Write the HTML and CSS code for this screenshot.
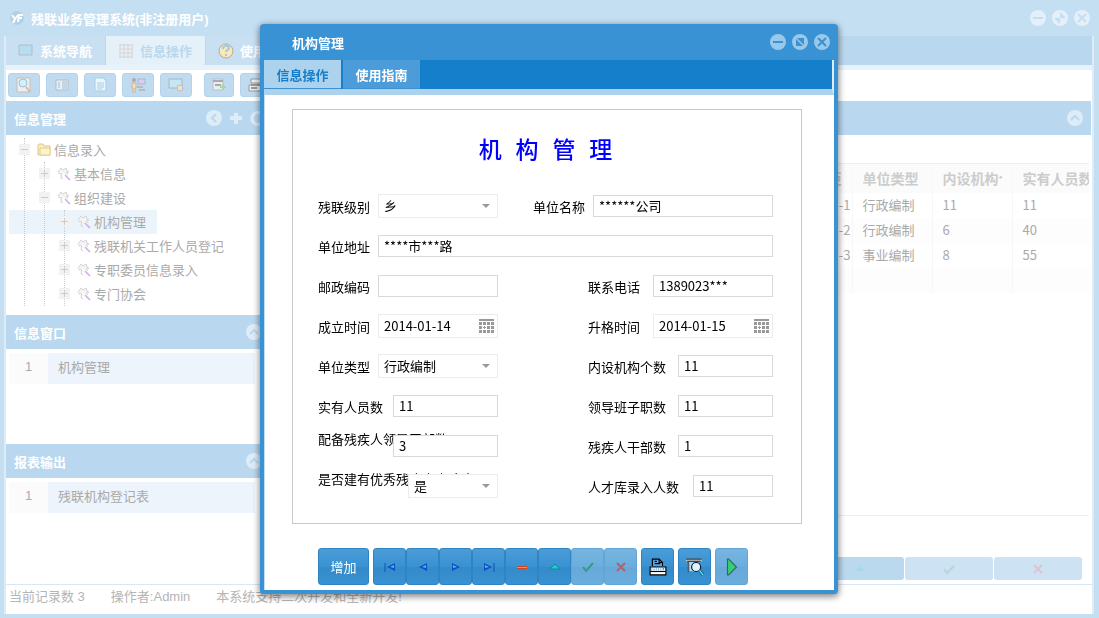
FILE: index.html
```html
<!DOCTYPE html>
<html lang="zh-CN">

<head>
    <meta charset="UTF-8">
    <meta name="viewport" content="width=device-width, initial-scale=1.0">
    <title>残联业务管理系统</title>
    <link rel="stylesheet" href="styles.css">
</head>

<body>
    <!-- shared icons -->
    <svg class="sprite" aria-hidden="true">
        <symbol id="i-min" viewBox="0 0 16 16"><circle cx="8" cy="8" r="8" fill="currentColor"/><path class="cut" d="M3 8h10"/></symbol>
        <symbol id="i-max" viewBox="0 0 16 16"><circle cx="8" cy="8" r="8" fill="currentColor"/><path class="cut-fill" d="M5 4h7v7zM4 5v7h7z"/></symbol>
        <symbol id="i-restore" viewBox="0 0 16 16"><circle cx="8" cy="8" r="8" fill="currentColor"/><path class="cut-fill" d="M8 2v6h6zM2 8h6v6z"/></symbol>
        <symbol id="i-close" viewBox="0 0 16 16"><circle cx="8" cy="8" r="8" fill="currentColor"/><path class="cut" d="M4 4l8 8M12 4l-8 8"/></symbol>
        <symbol id="i-up" viewBox="0 0 16 16"><circle cx="8" cy="8" r="8" fill="currentColor"/><path class="cut" d="M4 10l4-4 4 4"/></symbol>
        <symbol id="i-left" viewBox="0 0 16 16"><circle cx="8" cy="8" r="8" fill="currentColor"/><path class="cut" d="M10 4L6 8l4 4"/></symbol>
        <symbol id="i-wand" viewBox="0 0 14 14"><path d="M1 5l3-4 2 2 3-2 1 3 2 1-3 1 2 2M1 6l4 1-1 4 2 1" fill="#f4f4f4" stroke="#d4d4d4"/><path d="M8 8l5 5" stroke="#d5a6f0" stroke-width="1.500"/></symbol>
        <symbol id="i-date" viewBox="0 0 16 16"><path d="M0 1h15v2H0zM0 4h3v3H0zM4 4h3v3H4zM8 4h3v3H8zM12 4h3v3h-3zM0 8h3v3H0zM5 8h1v3H5zM4 9h3v1H4zM8 8h3v3H8zM12 8h3v3h-3zM0 12h3v3H0zM4 12h3v3H4zM8 12h3v3H8zM12 12h3v3h-3z" fill="#999"/></symbol>
    </svg>

    <div class="app">
        <header class="app-title">
            <svg width="18" height="18" viewBox="0 0 18 18"><circle cx="9" cy="9" r="7" fill="#b3d1e6"/><path d="M4 6l3 4-2 4M10 6L7 10M10 13l1-7h4M10 9h4" stroke="#fff" stroke-width="2" fill="none"/></svg>
            <span>残联业务管理系统(非注册用户)</span>
            <div class="window-tools">
                <button type="button" aria-label="最小化"><svg><use href="#i-min"/></svg></button>
                <button type="button" aria-label="还原"><svg><use href="#i-restore"/></svg></button>
                <button type="button" aria-label="关闭"><svg><use href="#i-close"/></svg></button>
            </div>
        </header>

        <div class="app-body">
            <nav class="app-tabs">
                <button type="button"><svg width="16" height="14" viewBox="0 0 16 14"><path d="M1 1h13v10H1z" fill="#b8dcf0" stroke="#b4bcc2"/></svg>系统导航</button>
                <button type="button" class="active"><svg width="16" height="16" viewBox="0 0 16 16"><path d="M1 2h14M1 6h14M1 10h14M1 14h14M2 1v14M6 1v14M10 1v14M14 1v14" stroke="#d9d2d2"/></svg>信息操作</button>
                <button type="button"><svg width="16" height="16" viewBox="0 0 16 16"><circle cx="8" cy="8" r="7" fill="#fbe9b4" stroke="#b0a9a6"/><path d="M5 6c0-4 6-4 6-1 0 2-3 2-3 4M8 11v2" fill="none" stroke="#9cc7ea" stroke-width="2"/></svg>使用指南</button>
            </nav>

            <div class="toolbar">
                <button type="button" aria-label="查询"><svg viewBox="0 0 16 16"><path d="M1 1h13v14H1z" fill="#eee" stroke="#c4bfb8"/><circle cx="7" cy="6" r="4" fill="#d4effa" stroke="#9dc2d4"/><path d="M10 10l4 5" stroke="#e8b199" stroke-width="2"/></svg></button>
                <button type="button" aria-label="列表"><svg viewBox="0 0 16 16"><path d="M2 3h12v10H2z" fill="#e3f1fa" stroke="#b4bcc3"/><path d="M4 6h2M4 8h2M4 10h2M8 5h5M8 7h5M8 9h5M8 11h5" stroke="#a7bbc9"/></svg></button>
                <button type="button" aria-label="文档"><svg viewBox="0 0 16 16"><path d="M3 1h8l3 3v10H3z" fill="#e9f6fd" stroke="#a8cde4"/><path d="M5 6h7M5 8h7M5 10h7M5 12h5" stroke="#a8cde4"/></svg></button>
                <button type="button" aria-label="人员"><svg viewBox="0 0 16 16"><circle cx="4" cy="3" r="2" fill="#b3aaa4"/><path d="M2 6h4v5H5v5H3v-5H2z" fill="#f4dfbb" stroke="#c5b499"/><path d="M8 2h7v5H8z" fill="#d8cdf4" stroke="#aeb6c2"/><path d="M7 10h6M9 13h6" stroke="#bbb" stroke-width="2"/></svg></button>
                <button type="button" aria-label="显示"><svg viewBox="0 0 16 16"><path d="M1 2h13v9H1z" fill="#c8e5f4" stroke="#a9b6be"/><circle cx="12" cy="11" r="3" fill="#efe6b4" stroke="#c8b0dc"/></svg></button>
                <button type="button" class="gap" aria-label="导出"><svg viewBox="0 0 16 16"><path d="M2 2h10v11H2z" fill="#e8eef2" stroke="#b9c0c5"/><path d="M2 4h10M4 8h6" stroke="#aaa" stroke-width="2"/><path d="M9 10h6M12 7v6" stroke="#a7d7a9" stroke-width="2"/></svg></button>
                <button type="button" aria-label="打印"><svg viewBox="0 0 16 16"><path d="M3 2h12v4H3zM1 8h14v6H1z" fill="#eee" stroke="#999"/><path d="M3 8h10M3 11h6" stroke="#999" stroke-width="2"/></svg></button>
            </div>

            <div class="main">
                <aside class="sidebar">
                    <section class="panel panel-tree">
                        <h2>信息管理
                            <span class="tools">
                                <svg><use href="#i-left"/></svg>
                                <svg viewBox="0 0 16 16"><path d="M8 3v11M2 8h12" stroke="currentColor" stroke-width="4"/></svg>
                                <svg viewBox="0 0 16 16"><path d="M12 4a6 6 0 1 0 2 5" stroke="currentColor" stroke-width="3" fill="none"/></svg>
                            </span>
                        </h2>
                        <ul class="tree">
                            <li>
                                <div class="node"><i class="toggle minus"></i><svg width="14" height="14" viewBox="0 0 14 14"><path d="M1 12V2l1-1h4l1 2h6v9z" fill="#fbefb8" stroke="#dcc78c"/><path d="M3 5h10v7H3z" fill="#fdf5c9" stroke="#e2cf95"/></svg>信息录入</div>
                                <ul>
                                    <li><div class="node"><i class="toggle"></i><svg width="14" height="14"><use href="#i-wand"/></svg>基本信息</div></li>
                                    <li>
                                        <div class="node"><i class="toggle minus"></i><svg width="14" height="14"><use href="#i-wand"/></svg>组织建设</div>
                                        <ul>
                                            <li><div class="node selected"><i class="toggle"></i><svg width="14" height="14"><use href="#i-wand"/></svg>机构管理</div></li>
                                            <li><div class="node"><i class="toggle"></i><svg width="14" height="14"><use href="#i-wand"/></svg>残联机关工作人员登记</div></li>
                                            <li><div class="node"><i class="toggle"></i><svg width="14" height="14"><use href="#i-wand"/></svg>专职委员信息录入</div></li>
                                            <li><div class="node"><i class="toggle"></i><svg width="14" height="14"><use href="#i-wand"/></svg>专门协会</div></li>
                                        </ul>
                                    </li>
                                </ul>
                            </li>
                        </ul>
                    </section>
                    <section class="panel panel-windows">
                        <h2>信息窗口 <svg><use href="#i-up"/></svg></h2>
                        <table class="list"><tr><th scope="row">1</th><td>机构管理</td></tr></table>
                    </section>
                    <section class="panel panel-reports">
                        <h2>报表输出 <svg><use href="#i-up"/></svg></h2>
                        <table class="list"><tr><th scope="row">1</th><td>残联机构登记表</td></tr></table>
                    </section>
                </aside>

                <section class="panel records">
                    <h2>机构管理 <svg><use href="#i-up"/></svg></h2>
                    <div class="grid-wrap">
                        <table class="grid">
                            <colgroup><col><col class="c-std"><col class="c-std"><col class="c-std"><col class="c-last"></colgroup>
                            <thead>
                                <tr><th></th><th class="end">距</th><th>单位类型</th><th><div>内设机构个数</div></th><th><div>实有人员数</div></th></tr>
                            </thead>
                            <tbody>
                                <tr><td></td><td class="end">-1</td><td>行政编制</td><td>11</td><td>11</td></tr>
                                <tr><td></td><td class="end">-2</td><td>行政编制</td><td>6</td><td>40</td></tr>
                                <tr><td></td><td class="end">-3</td><td>事业编制</td><td>8</td><td>55</td></tr>
                                <tr class="blank"><td></td><td></td><td></td><td></td><td></td></tr>
                            </tbody>
                        </table>
                    </div>
                    <div class="pager">
                        <button type="button" aria-label="编辑"><svg viewBox="0 0 12 12"><path d="M1 8l5-5 5 5z" fill="#a5dbe4"/></svg></button>
                        <button type="button" disabled aria-label="保存"><svg viewBox="0 0 12 12"><path d="M1 6l3 4 7-7" fill="none" stroke="#b5d5d8" stroke-width="2"/></svg></button>
                        <button type="button" disabled aria-label="取消"><svg viewBox="0 0 12 12"><path d="M2 2l8 8M10 2l-8 8" stroke="#dcc4d0" stroke-width="2"/></svg></button>
                    </div>
                </section>
            </div>

            <footer class="status">
                <span>当前记录数 3</span>
                <span>操作者:Admin</span>
                <span>本系统支持二次开发和全新开发!</span>
            </footer>
        </div>
    </div>

    <div class="overlay">
        <div class="dialog" role="dialog" aria-label="机构管理">
            <header class="dialog-title">
                <span>机构管理</span>
                <div class="window-tools">
                    <button type="button" aria-label="最小化"><svg><use href="#i-min"/></svg></button>
                    <button type="button" aria-label="最大化"><svg><use href="#i-max"/></svg></button>
                    <button type="button" aria-label="关闭"><svg><use href="#i-close"/></svg></button>
                </div>
            </header>
            <nav class="dialog-tabs">
                <button type="button" class="active">信息操作</button>
                <button type="button">使用指南</button>
            </nav>

            <div class="dialog-body">
                <form class="sheet">
                    <h1>机 构 管 理</h1>
                    <div class="row">
                        <div class="field left">
                            <label for="level">残联级别</label>
                            <span class="select w-120"><select id="level"><option>乡</option></select></span>
                        </div>
                        <div class="field wide">
                            <label for="name">单位名称</label>
                            <input id="name" class="w-180" type="text" value="******公司">
                        </div>
                    </div>
                    <div class="row">
                        <div class="field full">
                            <label for="addr">单位地址</label>
                            <input id="addr" class="w-395" type="text" value="****市***路">
                        </div>
                    </div>
                    <div class="row">
                        <div class="field left">
                            <label for="zip">邮政编码</label>
                            <input id="zip" class="w-120" type="text">
                        </div>
                        <div class="field right">
                            <label for="tel">联系电话</label>
                            <input id="tel" class="w-120" type="text" value="1389023***">
                        </div>
                    </div>
                    <div class="row">
                        <div class="field left">
                            <label for="founded">成立时间</label>
                            <span class="date w-120"><input id="founded" type="text" value="2014-01-14"><button type="button" aria-label="选择日期"><svg><use href="#i-date"/></svg></button></span>
                        </div>
                        <div class="field right">
                            <label for="upgraded">升格时间</label>
                            <span class="date w-120"><input id="upgraded" type="text" value="2014-01-15"><button type="button" aria-label="选择日期"><svg><use href="#i-date"/></svg></button></span>
                        </div>
                    </div>
                    <div class="row">
                        <div class="field left">
                            <label for="type">单位类型</label>
                            <span class="select w-120"><select id="type"><option>行政编制</option></select></span>
                        </div>
                        <div class="field right">
                            <label for="units">内设机构个数</label>
                            <input id="units" class="w-95" type="text" value="11">
                        </div>
                    </div>
                    <div class="row">
                        <div class="field left">
                            <label for="staff">实有人员数</label>
                            <input id="staff" class="w-105" type="text" value="11">
                        </div>
                        <div class="field right">
                            <label for="leaders">领导班子职数</label>
                            <input id="leaders" class="w-95" type="text" value="11">
                        </div>
                    </div>
                    <div class="row">
                        <div class="field left long">
                            <label for="disabled-leaders">配备残疾人领导干部数</label>
                            <input id="disabled-leaders" class="w-105" type="text" value="3">
                        </div>
                        <div class="field right">
                            <label for="cadres">残疾人干部数</label>
                            <input id="cadres" class="w-95" type="text" value="1">
                        </div>
                    </div>
                    <div class="row">
                        <div class="field left long">
                            <label for="pool">是否建有优秀残疾人人才库</label>
                            <span class="select w-90"><select id="pool"><option>是</option></select></span>
                        </div>
                        <div class="field right">
                            <label for="pool-count">人才库录入人数</label>
                            <input id="pool-count" class="w-80" type="text" value="11">
                        </div>
                    </div>
                </form>

                <div class="actions">
                    <button type="button" class="add">增加</button>
                    <div class="group">
                        <button type="button" aria-label="首条"><svg viewBox="0 0 12 12"><path d="M11 2v8L3 6z" fill="#0a50c0"/><path d="M10 4v3L6 6z" fill="#5cb0ff"/><path d="M1 2v9" stroke="#0a50c0"/></svg></button>
                        <button type="button" aria-label="上一条"><svg viewBox="0 0 12 12"><path d="M10 2v8L2 6z" fill="#0a50c0"/><path d="M9 4v3L5 6z" fill="#5cb0ff"/></svg></button>
                        <button type="button" aria-label="下一条"><svg viewBox="0 0 12 12"><path d="M2 2v8l8-4z" fill="#0a50c0"/><path d="M3 4v3l4-1z" fill="#5cb0ff"/></svg></button>
                        <button type="button" aria-label="末条"><svg viewBox="0 0 12 12"><path d="M1 2v8l8-4z" fill="#0a50c0"/><path d="M2 4v3l4-1z" fill="#5cb0ff"/><path d="M11 2v9" stroke="#0a50c0"/></svg></button>
                        <button type="button" aria-label="删除"><svg viewBox="0 0 12 12"><path d="M1 5h10v3H1z" fill="#c42"/><path d="M1 6h10v1H1z" fill="#f90"/></svg></button>
                        <button type="button" aria-label="编辑"><svg viewBox="0 0 12 12"><path d="M1 8l5-5 5 5z" fill="#1fc8d2" stroke="#0d8c9c"/></svg></button>
                        <button type="button" disabled aria-label="保存"><svg viewBox="0 0 12 12"><path d="M1 6l3 4 7-8" fill="none" stroke="#3a9a80" stroke-width="2"/></svg></button>
                        <button type="button" disabled aria-label="取消"><svg viewBox="0 0 12 12"><path d="M2 2l8 8M10 2l-8 8" stroke="#b4606e" stroke-width="2"/></svg></button>
                    </div>
                    <button type="button" aria-label="打印"><svg class="big" viewBox="0 0 16 16"><path d="M3 7V1h6l3 3v3" fill="#5ba6dc" stroke="#000"/><path d="M9 1v3h3M5 3h2M5 5h5" fill="none" stroke="#000"/><path d="M1 8h14v7H1z" fill="#fff" stroke="#000"/><path d="M1 12h14" stroke="#000"/><path d="M2 10h12" stroke="#7db5e0" stroke-width="2" stroke-dasharray="1 1"/><path d="M13 9v1" stroke="#e00"/></svg></button>
                    <button type="button" aria-label="预览"><svg class="big" viewBox="0 0 16 16"><path d="M2 3v9h4M12 3v2" fill="none" stroke="#555"/><path d="M3 3h9v9H3z" fill="#a8d9f4"/><path d="M0 2h14" stroke="#ccc" stroke-width="2"/><path d="M0 1h14M1 3h12" stroke="#444"/><circle cx="9" cy="8" r="4" fill="#d9f4ff" stroke="#112"/><path d="M12 11l3 4" stroke="#07a" stroke-width="3"/><path d="M12 11l3 4" stroke="#8de"/></svg></button>
                    <button type="button" disabled aria-label="执行"><svg class="big" viewBox="0 0 16 16"><path d="M4 1h1l7 7-7 7H4z" fill="#35d06a" stroke="#3a6070"/></svg></button>
                </div>
            </div>
        </div>
    </div>
</body>

</html>
```
FILE: styles.css
```css
* {
    margin: 0;
    padding: 0;
    box-sizing: border-box;
}

body {
    font-family: "Liberation Sans", "Noto Sans CJK SC", sans-serif;
    font-size: 13px;
    color: #000;
    background: #c5dff2;
}

button {
    border: none;
    background: none;
    color: inherit;
    font: inherit;
}

svg {
    display: block;
    flex: none;
}

.sprite {
    position: absolute;
    width: 0;
    height: 0;
}

.cut {
    fill: none;
    stroke: var(--cut);
    stroke-width: 2;
}

.cut-fill {
    fill: var(--cut);
}

/* main window, dimmed behind the dialog */

.app {
    --cut: #c5dff2;
    display: flex;
    flex-direction: column;
    height: 100vh;
    padding: 0 5px 4px 4px;
    overflow: hidden;
}

.app-title {
    display: flex;
    align-items: center;
    gap: 5px;
    height: 36px;
    padding: 0 4px;
    color: #fff;
    font-weight: bold;
}

.window-tools {
    display: flex;
    gap: 6px;
    margin-left: auto;
}

.window-tools svg {
    width: 16px;
    height: 16px;
}

.app .window-tools {
    color: #e4f0f9;
}

.app-body {
    flex: 1;
    min-height: 0;
    display: flex;
    flex-direction: column;
    background: #fff;
    border-left: 2px solid #deecf8;
    border-right: 2px solid #deecf8;
}

.app-tabs {
    display: flex;
    gap: 1px;
    height: 34px;
    background: #b9d8ef;
    border-bottom: 5px solid #e7f2fb;
}

.app-tabs button {
    display: flex;
    align-items: center;
    gap: 6px;
    width: 99px;
    padding: 0 12px;
    color: #fff;
    font-weight: bold;
    background: #c9e0f3;
    white-space: nowrap;
}

.app-tabs .active {
    color: #b9d8ef;
    background: #e5f1f9;
}

.toolbar {
    display: flex;
    gap: 6px;
    height: 31px;
    padding: 3px 2px;
}

.toolbar button {
    display: flex;
    align-items: center;
    justify-content: center;
    width: 32px;
    height: 24px;
    border: 1px solid #b4d4ec;
    border-radius: 3px;
    background: #c0dbf0;
}

.toolbar .gap {
    width: 30px;
    margin-left: 6px;
}

.toolbar svg {
    width: 16px;
    height: 16px;
}

.main {
    flex: 1;
    min-height: 0;
    display: flex;
    gap: 4px;
    padding-right: 1px;
}

.sidebar {
    display: flex;
    flex-direction: column;
    width: 256px;
}

.panel {
    --cut: #b9d8ef;
}

.panel h2 {
    display: flex;
    align-items: center;
    justify-content: space-between;
    height: 34px;
    padding: 0 8px;
    color: #fff;
    font-size: 13px;
    background: #b9d8ef;
}

.panel h2 svg {
    width: 16px;
    height: 16px;
    color: #deecf8;
}

.sidebar h2 > svg {
    margin-right: -8px;
}

.tools {
    display: flex;
    gap: 6px;
    margin-right: -12px;
}

.panel-tree {
    height: 214px;
}

.panel-windows {
    height: 129px;
}

.tree {
    margin: 3px 0 0 18px;
}

.tree,
.tree ul {
    list-style: none;
    border-left: 1px dotted #ccc;
}

.tree ul {
    margin-left: 19px;
}

.node {
    display: flex;
    align-items: center;
    height: 24px;
    gap: 3px;
    padding-bottom: 1px;
    color: #aaa;
    white-space: nowrap;
}

.toggle {
    position: relative;
    width: 11px;
    height: 11px;
    margin: 0 4px 0 -6px;
    background: #f2f2f2;
}

.toggle::before,
.toggle::after {
    content: "";
    position: absolute;
    left: 2px;
    top: 5px;
    width: 7px;
    height: 1px;
    background: #ccc;
}

.toggle::after {
    transform: rotate(90deg);
}

.toggle.minus::after {
    display: none;
}

.node.selected {
    width: 148px;
    margin-left: -56px;
    padding-left: 56px;
    background: rgba(160, 200, 235, 0.2);
}

.list {
    width: 246px;
    margin: 4px 3px;
    border-collapse: collapse;
    color: #aaa;
}

.list th {
    width: 39px;
    height: 31px;
    padding-bottom: 4px;
    background: #fbfbfb;
    font-weight: normal;
}

.list td {
    padding: 0 0 4px 10px;
    background: #edf4fb;
}

.records {
    flex: 1;
    min-width: 0;
    display: flex;
    flex-direction: column;
}

.grid-wrap {
    flex: 1;
    margin: 28px 2px 0 0;
    border-bottom: 1px solid #eee;
}

.grid {
    width: 100%;
    table-layout: fixed;
    border-collapse: collapse;
    font-family: "Noto Sans CJK SC", sans-serif;
    color: #aaa;
    text-align: left;
}

.c-std {
    width: 80px;
}

.c-last {
    width: 77px;
}

.grid th,
.grid td {
    height: 25px;
    padding: 0 10px;
    border-right: 1px solid #f7f7f7;
    font-size: 13px;
    line-height: 20px;
    white-space: nowrap;
    overflow: hidden;
}

.grid th {
    height: 29px;
    border-top: 1px solid #e6f0f8;
    background: #fbfbfb;
    color: #ccc;
    font-size: 14px;
}

.grid th div {
    overflow: hidden;
}

.grid tr > :last-child {
    padding-right: 0;
    border-right: none;
}

.grid td.end {
    padding-right: 1px;
    text-align: right;
}

.grid th.end {
    text-align: right;
}

.grid tbody tr:nth-child(even) {
    background: #fdfdfd;
}

.pager {
    display: flex;
    justify-content: flex-end;
    gap: 1px;
    height: 68px;
    padding: 41px 9px 4px;
}

.pager button {
    display: flex;
    align-items: center;
    justify-content: center;
    width: 88px;
    border-radius: 3px;
    background: #bad8ee;
}

.pager button:disabled {
    background: #cde2f3;
}

.pager svg {
    width: 12px;
    height: 12px;
}

.status {
    display: flex;
    gap: 26px;
    height: 30px;
    padding: 0 3px;
    border-top: 1px solid #d6e8f6;
    color: #b5b5b5;
    line-height: 23px;
}

/* dialog */

.overlay {
    position: fixed;
    inset: 0;
    display: flex;
    align-items: center;
    justify-content: center;
    padding-right: 1px;
}

.dialog {
    --cut: #3892d3;
    width: 578px;
    padding: 0 4px 4px;
    background: #3892d3;
    border-radius: 4px;
    box-shadow: 0 2px 6px 1px rgba(0, 0, 0, 0.45);
}

.dialog-title {
    display: flex;
    align-items: center;
    height: 36px;
    padding: 0 4px 0 28px;
    color: #fff;
    font-weight: bold;
}

.dialog-title .window-tools {
    color: #9ac8e9;
}

.dialog-tabs {
    display: flex;
    gap: 2px;
    height: 35px;
    background: #157fcc;
    border-right: 2px solid #deecf8;
    border-bottom: 6px solid #add2ed;
}

.dialog-tabs button {
    width: 77px;
    color: #fff;
    font-weight: bold;
    background: #4b9cd8;
    border-bottom: 1px solid #3892d3;
}

.dialog-tabs .active {
    color: #157fcc;
    background: #add2ed;
}

.dialog-body {
    padding: 14px 32px 5px 27px;
    background: #fff;
    border-left: 1px solid #c5dff2;
}

.sheet {
    display: flex;
    flex-direction: column;
    gap: 18px;
    padding: 18px 28px 26px 25px;
    border: 1px solid #c8c8c8;
    font-family: "Noto Sans CJK SC", sans-serif;
}

.sheet h1 {
    height: 49px;
    color: #00f;
    font-family: "Liberation Mono", "Noto Sans CJK SC", sans-serif;
    font-size: 23px;
    font-weight: 500;
    line-height: 48px;
    text-align: center;
}

.row {
    display: flex;
    justify-content: space-between;
    height: 22px;
}

.field {
    display: flex;
    align-items: center;
    justify-content: space-between;
    white-space: nowrap;
}

.left {
    width: 180px;
}

.right {
    width: 185px;
}

.wide {
    width: 240px;
}

.full {
    width: 100%;
}

.long label {
    width: 0;
    align-self: flex-start;
    line-height: 8px;
}

input,
select {
    height: 22px;
    padding: 0 5px 2px;
    border: 1px solid #d9d9d9;
    border-radius: 0;
    background: #fff;
    color: #000;
    font: inherit;
    appearance: none;
}

.long input,
.long .select {
    position: relative;
}

.select,
.date {
    position: relative;
    display: flex;
    height: 24px;
    border: 1px solid #ececec;
    background: #fff;
}

.select select,
.date input {
    width: 100%;
    border: none;
}

.select::after {
    content: "";
    position: absolute;
    right: 7px;
    top: 9px;
    border: 4px solid transparent;
    border-top-color: #999;
    border-bottom: none;
    pointer-events: none;
}

.date button {
    position: absolute;
    right: 2px;
    top: 3px;
}

.date svg {
    width: 16px;
    height: 16px;
}

.w-80 {
    width: 80px;
}

.w-90 {
    width: 90px;
}

.w-95 {
    width: 95px;
}

.w-105 {
    width: 105px;
}

.w-120 {
    width: 120px;
}

.w-180 {
    width: 180px;
}

.w-395 {
    width: 395px;
}

.actions {
    display: flex;
    gap: 4px;
    margin-top: 24px;
    padding-left: 26px;
}

.group {
    display: flex;
}

.actions button {
    display: flex;
    align-items: center;
    justify-content: center;
    width: 33px;
    height: 37px;
    border: 1px solid #2f84c4;
    border-radius: 3px;
    background: linear-gradient(#4b9cd7, #3892d3 50%, #358ac8 51%, #3892d3);
}

.actions .add {
    width: 51px;
    color: #fff;
}

.actions button:disabled {
    border-color: #62a6d8;
    background: linear-gradient(#78b4e0, #6aaedd 50%, #68a8d8 51%, #6aaedd);
}

.actions svg {
    width: 12px;
    height: 12px;
}

.actions svg.big {
    width: 18px;
    height: 18px;
}
```
